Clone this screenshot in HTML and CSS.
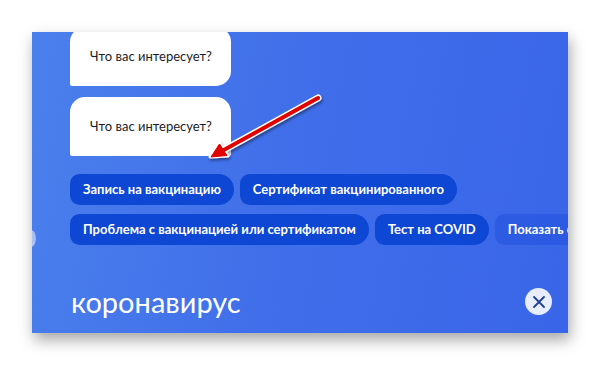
FILE: index.html
```html
<!DOCTYPE html>
<html lang="ru">
<head>
<meta charset="utf-8">
<link rel="stylesheet" href="styles.css">
</head>
<body>
<div class="panel">
  <div class="chat">
    <div class="bubble bubble-first">Что вас интересует?</div>
    <div class="bubble bubble-second">Что вас интересует?</div>
  </div>
  <div class="chips">
    <div class="chip-row">
      <span class="chip">Запись на вакцинацию</span>
      <span class="chip">Сертификат вакцинированного</span>
    </div>
    <div class="chip-row">
      <span class="chip">Проблема с вакцинацией или сертификатом</span>
      <span class="chip">Тест на COVID</span>
      <span class="chip chip-light">Показать ещё</span>
    </div>
  </div>
  <div class="footer">
    <span class="title">коронавирус</span>
    <button class="close" aria-label="Закрыть">
      <svg width="14" height="14" viewBox="0 0 14 14"><path d="M2 2 L12 12 M12 2 L2 12" stroke="#1d3f94" stroke-width="1.8" stroke-linecap="round" fill="none"/></svg>
    </button>
  </div>
  <span class="edge-blob"></span>
  <svg class="arrow" width="140" height="90" viewBox="0 0 140 90">
    <defs>
      <filter id="sh" x="-20%" y="-20%" width="140%" height="150%">
        <feDropShadow dx="1" dy="2" stdDeviation="1.5" flood-color="#000" flood-opacity="0.45"/>
      </filter>
    </defs>
    <g filter="url(#sh)">
      <path d="M126 8 L28 62" stroke="#fff" stroke-width="7" stroke-linecap="round" fill="none"/>
      <path d="M18 67 L27 52 L36 66 Z" fill="#fff" stroke="#fff" stroke-width="3" stroke-linejoin="round"/>
      <path d="M126 8 L30 61" stroke="#e00000" stroke-width="4" stroke-linecap="round" fill="none"/>
      <path d="M19 67 L27.5 54 L35 65.5 Z" fill="#e00000" stroke="#e00000" stroke-width="1" stroke-linejoin="round"/>
    </g>
  </svg>
</div>
</body>
</html>
```

FILE: styles.css
```css
html, body {
  margin: 0;
  padding: 0;
  background: #ffffff;
}
body {
  width: 600px;
  height: 366px;
  overflow: hidden;
  font-family: Lato, "Noto Sans", sans-serif;
}
.panel {
  position: relative;
  margin: 32px 0 0 32px;
  width: 536px;
  height: 301px;
  overflow: hidden;
  background: linear-gradient(100deg, #4a80ec 0%, #416fea 45%, #3965e8 100%);
  box-shadow: 2px 7px 14px rgba(0, 0, 0, 0.35);
  display: flex;
  flex-direction: column;
  padding-left: 38px;
  padding-right: 16px;
  box-sizing: border-box;
}
.chat {
  display: flex;
  flex-direction: column;
  gap: 11px;
  margin-top: -5px;
}
.bubble {
  width: 161px;
  height: 59px;
  box-sizing: border-box;
  background: #ffffff;
  color: #1c1c2a;
  font-size: 13px;
  line-height: 59px;
  padding-left: 20px;
  white-space: nowrap;
}
.bubble-first {
  border-radius: 15px 15px 15px 2px;
}
.bubble-second {
  border-radius: 15px 15px 2px 2px;
}
.chips {
  margin-top: 18px;
  display: flex;
  flex-direction: column;
  gap: 9px;
}
.chip-row {
  display: flex;
  gap: 6px;
  flex-wrap: nowrap;
}
.chip {
  flex: none;
  height: 31px;
  line-height: 31px;
  padding: 0 13px;
  background: #0d47d3;
  color: #ffffff;
  font-weight: bold;
  font-size: 13px;
  border-radius: 10px 16px 16px 10px;
  white-space: nowrap;
}
.chip-light {
  background: rgba(20, 70, 215, 0.35);
}
.footer {
  margin-top: auto;
  margin-bottom: 11px;
  display: flex;
  justify-content: space-between;
  align-items: center;
}
.title {
  color: #ffffff;
  font-size: 29px;
  line-height: 40px;
  margin-left: 1px;
  padding-top: 3px;
}
.close {
  width: 27px;
  height: 27px;
  border-radius: 50%;
  border: none;
  padding: 0;
  background: #e7edfc;
  display: flex;
  align-items: center;
  justify-content: center;
  margin-top: 2px;
}
.edge-blob {
  position: absolute;
  left: -6px;
  top: 198px;
  width: 10px;
  height: 17px;
  border-radius: 50%;
  background: linear-gradient(90deg, #ffffff, #c3d2f4);
  opacity: 0.7;
}
.arrow {
  position: absolute;
  left: 160px;
  top: 58px;
}
```
